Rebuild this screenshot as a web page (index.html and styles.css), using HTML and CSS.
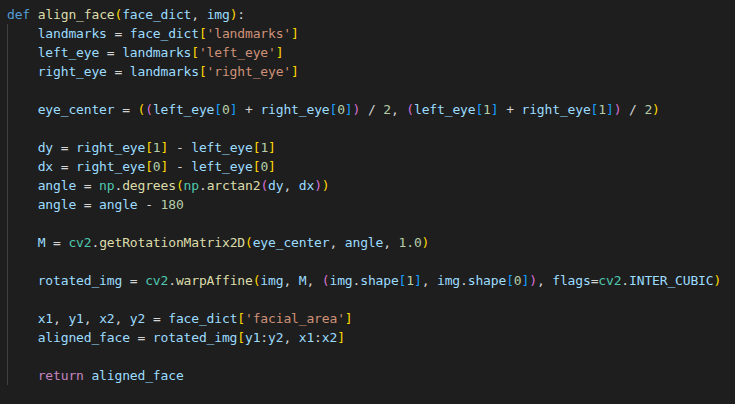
FILE: index.html
```html
<!DOCTYPE html>
<html>
<head>
<meta charset="utf-8">
<link rel="stylesheet" href="styles.css">
</head>
<body>
<div class="editor">
<div class="ln"><span class="kw">def</span> <span class="fn">align_face</span><span class="b1">(</span><span class="v">face_dict</span>, <span class="v">img</span><span class="b1">)</span>:</div>
<div class="body">
<div class="ln"><span class="v">landmarks</span> = <span class="v">face_dict</span><span class="b1">[</span><span class="s">'landmarks'</span><span class="b1">]</span></div>
<div class="ln"><span class="v">left_eye</span> = <span class="v">landmarks</span><span class="b1">[</span><span class="s">'left_eye'</span><span class="b1">]</span></div>
<div class="ln"><span class="v">right_eye</span> = <span class="v">landmarks</span><span class="b1">[</span><span class="s">'right_eye'</span><span class="b1">]</span></div>
<div class="ln"> </div>
<div class="ln"><span class="v">eye_center</span> = <span class="b1">(</span><span class="b2">(</span><span class="v">left_eye</span><span class="b3">[</span><span class="n">0</span><span class="b3">]</span> + <span class="v">right_eye</span><span class="b3">[</span><span class="n">0</span><span class="b3">]</span><span class="b2">)</span> / <span class="n">2</span>, <span class="b2">(</span><span class="v">left_eye</span><span class="b3">[</span><span class="n">1</span><span class="b3">]</span> + <span class="v">right_eye</span><span class="b3">[</span><span class="n">1</span><span class="b3">]</span><span class="b2">)</span> / <span class="n">2</span><span class="b1">)</span></div>
<div class="ln"> </div>
<div class="ln"><span class="v">dy</span> = <span class="v">right_eye</span><span class="b1">[</span><span class="n">1</span><span class="b1">]</span> - <span class="v">left_eye</span><span class="b1">[</span><span class="n">1</span><span class="b1">]</span></div>
<div class="ln"><span class="v">dx</span> = <span class="v">right_eye</span><span class="b1">[</span><span class="n">0</span><span class="b1">]</span> - <span class="v">left_eye</span><span class="b1">[</span><span class="n">0</span><span class="b1">]</span></div>
<div class="ln"><span class="v">angle</span> = <span class="c">np</span>.<span class="fn">degrees</span><span class="b1">(</span><span class="c">np</span>.<span class="fn">arctan2</span><span class="b2">(</span><span class="v">dy</span>, <span class="v">dx</span><span class="b2">)</span><span class="b1">)</span></div>
<div class="ln"><span class="v">angle</span> = <span class="v">angle</span> - <span class="n">180</span></div>
<div class="ln"> </div>
<div class="ln"><span class="v">M</span> = <span class="c">cv2</span>.<span class="fn">getRotationMatrix2D</span><span class="b1">(</span><span class="v">eye_center</span>, <span class="v">angle</span>, <span class="n">1.0</span><span class="b1">)</span></div>
<div class="ln"> </div>
<div class="ln"><span class="v">rotated_img</span> = <span class="c">cv2</span>.<span class="fn">warpAffine</span><span class="b1">(</span><span class="v">img</span>, <span class="v">M</span>, <span class="b2">(</span><span class="v">img</span>.<span class="v">shape</span><span class="b3">[</span><span class="n">1</span><span class="b3">]</span>, <span class="v">img</span>.<span class="v">shape</span><span class="b3">[</span><span class="n">0</span><span class="b3">]</span><span class="b2">)</span>, <span class="v">flags</span>=<span class="c">cv2</span>.<span class="v">INTER_CUBIC</span><span class="b1">)</span></div>
<div class="ln"> </div>
<div class="ln"><span class="v">x1</span>, <span class="v">y1</span>, <span class="v">x2</span>, <span class="v">y2</span> = <span class="v">face_dict</span><span class="b1">[</span><span class="s">'facial_area'</span><span class="b1">]</span></div>
<div class="ln"><span class="v">aligned_face</span> = <span class="v">rotated_img</span><span class="b1">[</span><span class="v">y1</span>:<span class="v">y2</span>, <span class="v">x1</span>:<span class="v">x2</span><span class="b1">]</span></div>
<div class="ln"> </div>
<div class="ln"><span class="kr">return</span> <span class="v">aligned_face</span></div>
</div>
</div>
</body>
</html>
```
FILE: styles.css
```css
html, body {
  margin: 0;
  padding: 0;
  background: #1e1e1e;
  width: 735px;
  height: 404px;
  overflow: hidden;
}
.editor {
  padding: 5px 0 0 7px;
  font-family: "DejaVu Sans Mono", "Liberation Mono", monospace;
  font-size: 13px;
  letter-spacing: -0.15px;
  color: #d4d4d4;
}
.ln {
  height: 19px;
  line-height: 19px;
  white-space: pre;
}
.body {
  border-left: 1px solid #404040;
  padding-left: 29.7px;
}
.kw { color: #569cd6; }
.kr { color: #c586c0; }
.fn { color: #dcdcaa; }
.v { color: #9cdcfe; }
.s { color: #ce9178; }
.n { color: #b5cea8; }
.c { color: #4ec9b0; }
.b1 { color: #ffd700; }
.b2 { color: #da70d6; }
.b3 { color: #179fff; }
```
